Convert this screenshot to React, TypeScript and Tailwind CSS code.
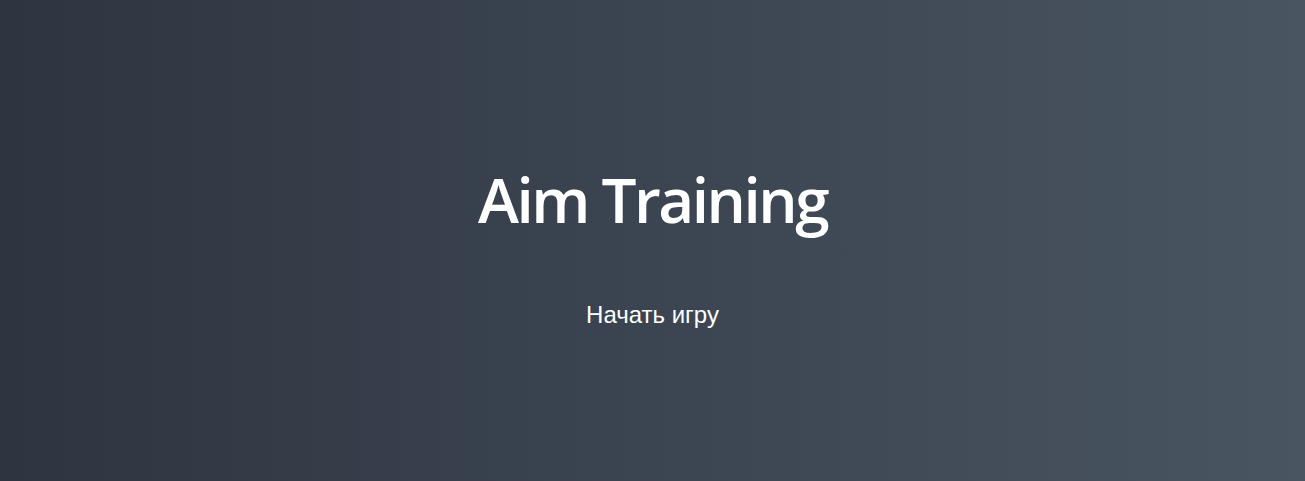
export default function App() {
  return (
    <div className="flex h-[481px] w-full flex-col items-center justify-center bg-gradient-to-r from-[#2d3540] to-[#4a5562]">
      <h1 className="mt-[22px] font-['Open_Sans',sans-serif] text-[62px] font-semibold leading-[1.2] tracking-[-2.5px] text-white">
        Aim Training
      </h1>
      <button className="mt-[53px] px-4 py-2 font-['Liberation_Sans',Arial,sans-serif] text-[24px] text-white">
        Начать игру
      </button>
    </div>
  );
}
